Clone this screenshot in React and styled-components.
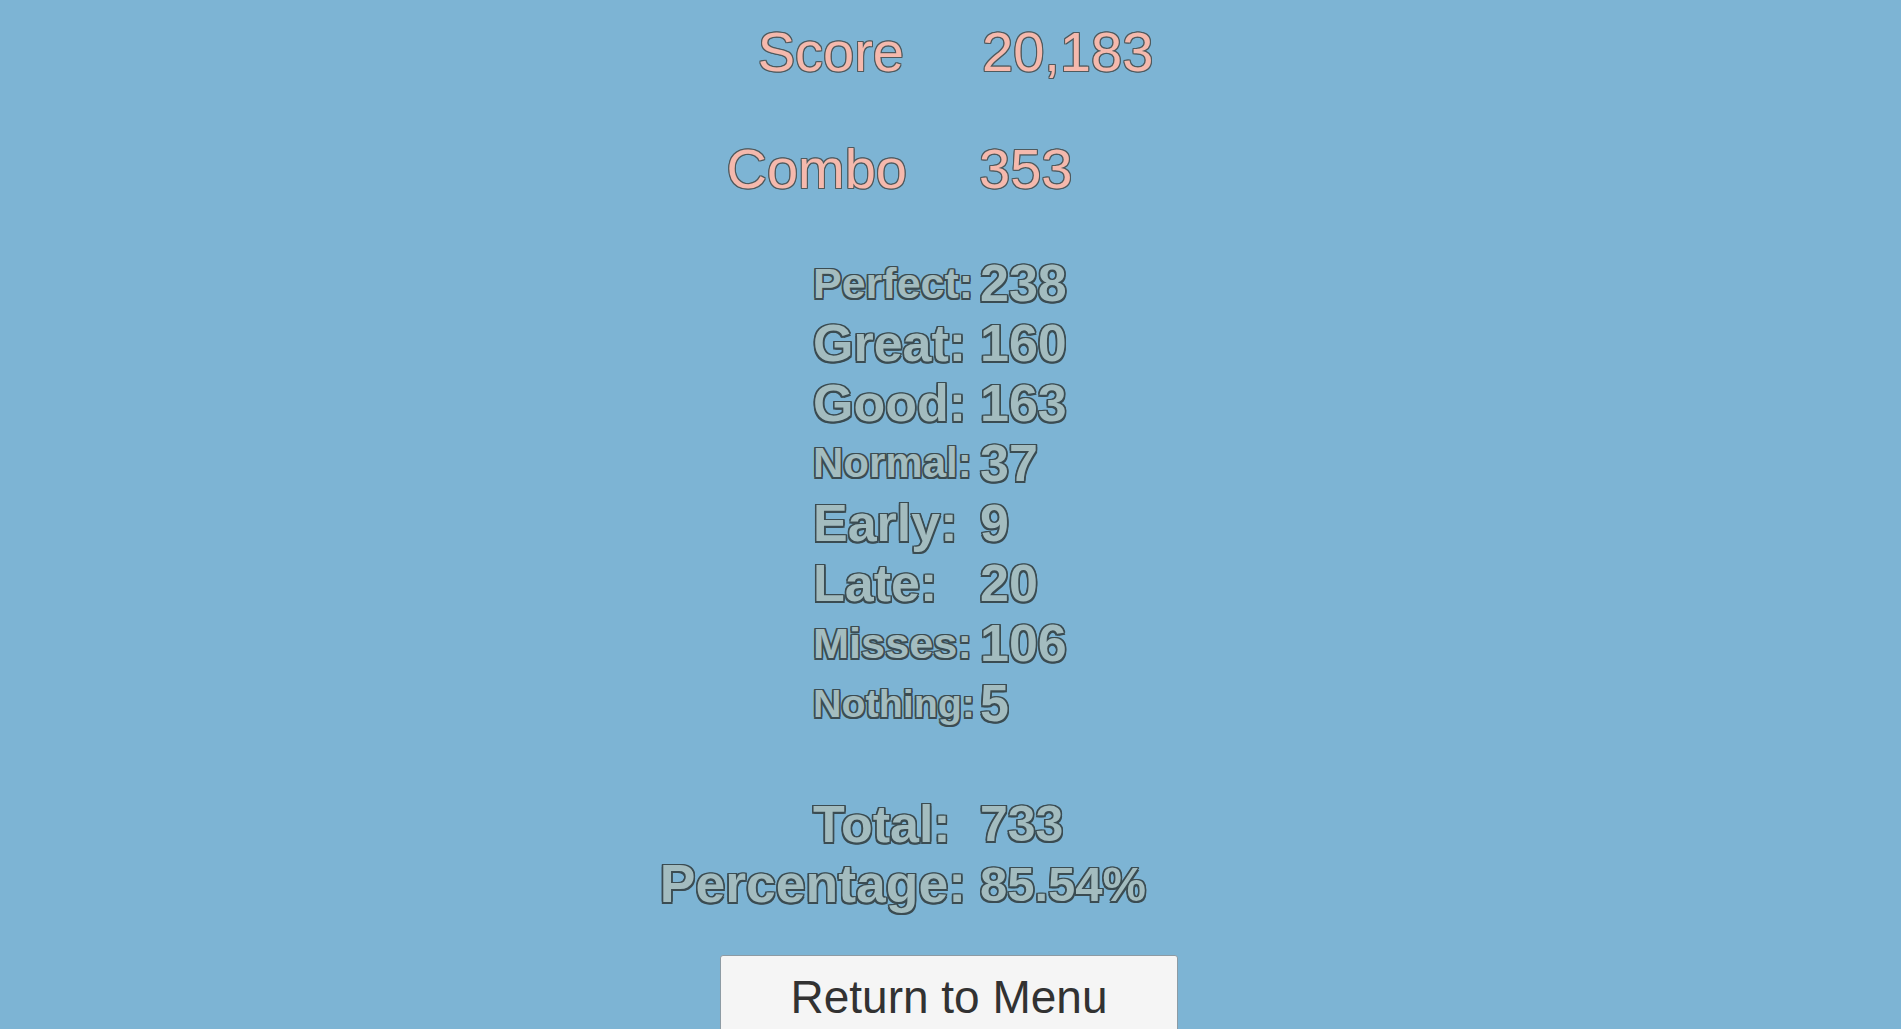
import React from 'react'
import styled, { createGlobalStyle } from 'styled-components'

const outline = (w, c) => `
    ${w}px 0 0 ${c}, -${w}px 0 0 ${c}, 0 ${w}px 0 ${c}, 0 -${w}px 0 ${c},
    ${w}px ${w}px 0 ${c}, -${w}px ${w}px 0 ${c}, ${w}px -${w}px 0 ${c}, -${w}px -${w}px 0 ${c}
`

const GlobalStyle = createGlobalStyle`
    html, body {
        margin: 0;
        padding: 0;
        background: #7db4d4;
        overflow: hidden;
    }
    body {
        font-family: "Liberation Sans", Arial, sans-serif;
    }
`

const Styled = {
    Page: styled.div`
        width: 100%;
        height: 1029px;
        display: flex;
        justify-content: center;
        padding-right: 3px;
        box-sizing: border-box;
        background: #7db4d4;
    `,
    Column: styled.div`
        width: 458px;
        display: flex;
        flex-direction: column;
        padding-top: 20px;
    `,
    Headline: styled.div`
        display: grid;
        grid-template-columns: ${p => p.$labelWidth}px 1fr;
        column-gap: ${p => p.$split}px;
        margin-bottom: ${p => p.$gap}px;
        font-size: 56px;
        line-height: 64px;
        color: #f5b9ad;
        text-shadow: ${outline(1, '#4f5a5e')};
        white-space: nowrap;
    `,
    HeadLabel: styled.div`
        text-align: right;
    `,
    HeadValue: styled.div`
        text-align: left;
    `,
    Stats: styled.div`
        display: flex;
        flex-direction: column;
        padding-left: 93px;
    `,
    StatRow: styled.div`
        display: grid;
        grid-template-columns: 167px 1fr;
        align-items: center;
        height: 60px;
        font-weight: bold;
        color: #a3bcbf;
        text-shadow: ${outline(1.5, '#3b4c52')};
        white-space: nowrap;
    `,
    StatLabel: styled.div`
        display: flex;
        justify-content: ${p => (p.$right ? 'flex-end' : 'flex-start')};
        font-size: ${p => p.$size}px;
        line-height: 60px;
    `,
    StatValue: styled.div`
        font-size: ${p => p.$size || 52}px;
        line-height: 60px;
    `,
    Summary: styled.div`
        display: flex;
        flex-direction: column;
        padding-left: 93px;
        margin-top: 61px;
    `,
    ButtonWrap: styled.div`
        margin-top: 41px;
    `,
    MenuButton: styled.button`
        width: 458px;
        height: 84px;
        background: #f5f5f5;
        border: 1px solid #8d9ba4;
        border-radius: 3px;
        color: #323232;
        font-family: "Liberation Sans", Arial, sans-serif;
        font-size: 46px;
        padding: 0;
        cursor: pointer;
    `,
}

const stats = [
    { label: 'Perfect:', value: '238', size: 43 },
    { label: 'Great:', value: '160', size: 52 },
    { label: 'Good:', value: '163', size: 52 },
    { label: 'Normal:', value: '37', size: 42 },
    { label: 'Early:', value: '9', size: 52 },
    { label: 'Late:', value: '20', size: 52 },
    { label: 'Misses:', value: '106', size: 43.3 },
    { label: 'Nothing:', value: '5', size: 39.4 },
]

const App = () => {
    return (
        <Styled.Page>
            <GlobalStyle />
            <Styled.Column>
                <Styled.Headline $gap={53} $split={78} $labelWidth={184}>
                    <Styled.HeadLabel>Score</Styled.HeadLabel>
                    <Styled.HeadValue>20,183</Styled.HeadValue>
                </Styled.Headline>
                <Styled.Headline $gap={52} $split={72} $labelWidth={187}>
                    <Styled.HeadLabel>Combo</Styled.HeadLabel>
                    <Styled.HeadValue>353</Styled.HeadValue>
                </Styled.Headline>

                <Styled.Stats>
                    {stats.map(s => (
                        <Styled.StatRow key={s.label}>
                            <Styled.StatLabel $size={s.size}>{s.label}</Styled.StatLabel>
                            <Styled.StatValue>{s.value}</Styled.StatValue>
                        </Styled.StatRow>
                    ))}
                </Styled.Stats>

                <Styled.Summary>
                    <Styled.StatRow>
                        <Styled.StatLabel $size={52}>Total:</Styled.StatLabel>
                        <Styled.StatValue $size={50}>733</Styled.StatValue>
                    </Styled.StatRow>
                    <Styled.StatRow>
                        <Styled.StatLabel $size={53.5} $right>
                            <span style={{ marginRight: 14 }}>Percentage:</span>
                        </Styled.StatLabel>
                        <Styled.StatValue $size={49}>85.54%</Styled.StatValue>
                    </Styled.StatRow>
                </Styled.Summary>

                <Styled.ButtonWrap>
                    <Styled.MenuButton>Return to Menu</Styled.MenuButton>
                </Styled.ButtonWrap>
            </Styled.Column>
        </Styled.Page>
    )
}

export default App
